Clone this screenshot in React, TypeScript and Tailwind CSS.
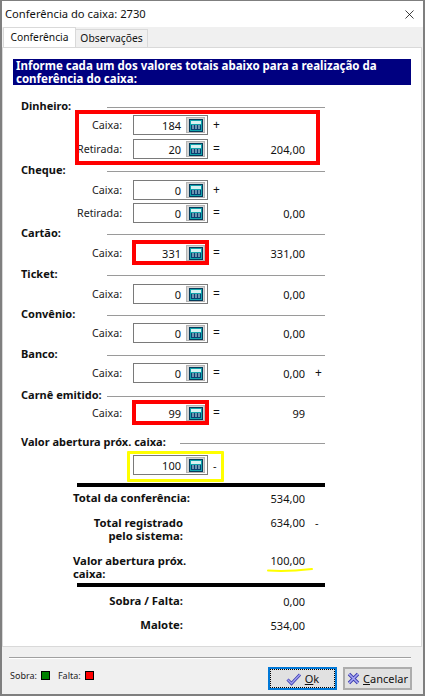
import { X } from "lucide-react";

const FONT = "font-['Noto_Sans','DejaVu_Sans',sans-serif]";

function CalcIcon() {
  return (
    <div className="flex h-[16px] w-[19px] items-center justify-center border border-[#b4b4b4] bg-[#d4d4d4]">
      <svg width="14" height="13" viewBox="0 0 14 13">
        <rect x="0.5" y="0.5" width="13" height="12" fill="#12a5ad" stroke="#063a5a" />
        <rect x="2" y="2" width="10" height="3" fill="#d8f2f2" />
        <rect x="2" y="6" width="10" height="5" fill="#0a3f70" />
        <path d="M3 7h2M6 7h2M9 7h2M3 9h2M6 9h2M9 9h2" stroke="#cfe8ee" strokeWidth="1" />
      </svg>
    </div>
  );
}

function Field({ value }: { value: string }) {
  return (
    <div className="flex h-5 w-[75px] items-center justify-end border border-[#7a7a7a] bg-white pr-[2px]">
      <span className="mr-[5px] text-[11px] leading-none text-[#111]">{value}</span>
      <CalcIcon />
    </div>
  );
}

function Heading({ label, line, className }: { label: string; line: string; className: string }) {
  return (
    <div className={`flex h-[14px] items-center pr-[96px] pl-[18px] ${className}`}>
      <span className="mb-[2px] text-[11px] leading-none font-bold whitespace-nowrap text-[#111]">{label}</span>
      <div className={`mt-[2px] ml-auto h-px bg-[#9a9a9a] ${line}`} />
    </div>
  );
}

function FieldRow({
  label,
  value,
  op,
  total,
  suffix,
  className,
  highlight,
}: {
  label: string;
  value: string;
  op: string;
  total?: string;
  suffix?: string;
  className: string;
  highlight?: boolean;
}) {
  return (
    <div className={`flex h-5 items-center ${className}`}>
      <span className="w-[130px] pr-[11px] text-right text-[10.7px] leading-none text-[#222]">{label}</span>
      <div className="relative">
        <Field value={value} />
        {highlight && <div className="absolute -top-[3px] -right-[1px] -bottom-[2px] -left-[1px] border-4 border-[#ff0000]" />}
      </div>
      <span className="ml-[5px] w-[10px] text-[12px] leading-none text-[#111]">{op}</span>
      <span className="w-[82px] text-right text-[11px] leading-none text-[#111]">{total}</span>
      {suffix && <span className="ml-[10px] text-[12px] leading-none text-[#111]">{suffix}</span>}
    </div>
  );
}

function Bar({ className }: { className: string }) {
  return <div className={`mr-[96px] ml-[74px] h-1 bg-black ${className}`} />;
}

export default function App() {
  return (
    <div className={`flex h-[696px] w-[425px] flex-col overflow-hidden border-2 border-t-[1px] border-[#7f7f7f] bg-[#f0f0f0] ${FONT}`}>
      {/* title */}
      <div className="flex h-[26px] shrink-0 items-center justify-between bg-white pr-[6px] pl-[3px]">
        <span className="text-[11.2px] leading-none text-[#111]">Conferência do caixa: 2730</span>
        <X size={15} strokeWidth={1.2} className="text-black" />
      </div>

      {/* tabs */}
      <div className="flex h-5 shrink-0 items-end pl-[1px]">
        <div className="relative z-10 flex h-[20px] w-[73px] items-center justify-center border border-b-0 border-[#d9d9d9] bg-white text-[10.3px] leading-none text-[#111]">
          Conferência
        </div>
        <div className="flex h-[18px] w-[72px] items-center justify-center border border-b-0 border-l-0 border-[#d9d9d9] text-[10.3px] leading-none text-[#111]">
          Observações
        </div>
      </div>

      {/* panel */}
      <div className="mr-[1px] flex h-[600px] shrink-0 flex-col border border-[#d9d9d9] bg-white pt-[11px]">
        <div className="mr-[10px] ml-[10px] h-[26px] bg-[#000080] pl-[3px] text-[11.5px] leading-[13px] font-bold text-white">
          Informe cada um dos valores totais abaixo para a realização da
          <br />
          conferência do caixa:
        </div>

        <Heading label="Dinheiro:" line="w-[218px]" className="mt-[14px]" />
        <div className="relative mt-[2px]">
          <FieldRow label="Caixa:" value="184" op="+" className="" />
          <FieldRow label="Retirada:" value="20" op="=" total="204,00" className="mt-1" />
          <div className="absolute -top-[5px] -bottom-[6px] left-[72px] w-[245px] border-4 border-[#ff0000]" />
        </div>

        <Heading label="Cheque:" line="w-[218px]" className="mt-1" />
        <FieldRow label="Caixa:" value="0" op="+" className="mt-[3px]" />
        <FieldRow label="Retirada:" value="0" op="=" total="0,00" className="mt-[3px]" />

        <Heading label="Cartão:" line="w-[218px]" className="mt-[3px]" />
        <FieldRow label="Caixa:" value="331" op="=" total="331,00" className="mt-[3px]" highlight />

        <Heading label="Ticket:" line="w-[218px]" className="mt-1" />
        <FieldRow label="Caixa:" value="0" op="=" total="0,00" className="mt-[3px]" />

        <Heading label="Convênio:" line="w-[218px]" className="mt-[3px]" />
        <FieldRow label="Caixa:" value="0" op="=" total="0,00" className="mt-[2px]" />

        <Heading label="Banco:" line="w-[218px]" className="mt-1" />
        <FieldRow label="Caixa:" value="0" op="=" total="0,00" suffix="+" className="mt-[2px]" />

        <Heading label="Carnê emitido:" line="w-[218px]" className="mt-[5px]" />
        <FieldRow label="Caixa:" value="99" op="=" total="99" className="mt-px" highlight />

        <Heading label="Valor abertura próx. caixa:" line="w-[145px]" className="mt-3" />
        <div className="mt-[6px] flex h-5 items-center pl-[130px]">
          <div className="relative">
            <Field value="100" />
            <div className="absolute -top-[4px] -right-[16px] -bottom-[7px] -left-[6px] rounded-[1px] border-[3px] border-[#ffff00]" />
          </div>
          <span className="ml-[5px] text-[11px] leading-none text-[#111]">-</span>
        </div>

        <Bar className="mt-2" />

        <div className="mt-[4px] flex h-[14px] items-center text-[11px] leading-none">
          <span className="ml-[70px] w-[148px] text-[11.3px] font-bold text-[#111]">Total da conferência:</span>
          <span className="w-[84px] text-right text-[#111]">534,00</span>
        </div>
        <div className="mt-[10px] flex h-[28px] text-[11px] leading-[13px]">
          <span className="w-[181px] pt-px pr-[1px] pl-[60px] text-right text-[11.3px] font-bold text-[#111]">
            Total registrado
            <br />
            pelo sistema:
          </span>
          <span className="w-[121px] pt-px text-right text-[#111]">634,00</span>
          <span className="ml-[10px] pt-px text-[#111]">-</span>
        </div>
        <div className="mt-[11px] flex h-[28px] text-[11px] leading-[13px]">
          <span className="ml-[70px] w-[148px] text-[11.3px] font-bold text-[#111]">
            Valor abertura próx.
            <br />
            caixa:
          </span>
          <span className="relative h-[14px] w-[84px] text-right text-[#111]">
            100,00
            <svg className="absolute top-[13px] right-[-8px]" width="46" height="6" viewBox="0 0 46 6">
              <path d="M1 3.5C14 4.5 32 3.5 45 2" fill="none" stroke="#ffff00" strokeWidth="2" strokeLinecap="round" />
            </svg>
          </span>
        </div>

        <Bar className="mt-[1px]" />

        <div className="mt-[7px] flex h-[14px] items-center text-[11px] leading-none">
          <span className="w-[181px] pr-[1px] text-right text-[11.3px] font-bold text-[#111]">Sobra / Falta:</span>
          <span className="w-[121px] text-right text-[#111]">0,00</span>
        </div>
        <div className="mt-[10px] flex h-[14px] items-center text-[11px] leading-none">
          <span className="w-[181px] pr-[1px] text-right text-[11.3px] font-bold text-[#111]">Malote:</span>
          <span className="w-[121px] text-right text-[#111]">534,00</span>
        </div>
      </div>

      {/* footer */}
      <div className="flex min-h-0 flex-1 flex-col pt-[10px]">
        <div className="mr-[12px] ml-[7px] h-[2px] border-t border-b border-t-[#a0a0a0] border-b-white" />
        <div className="mt-[8px] flex items-start justify-between pr-[11px] pl-[8px]">
          <div className="mt-[4px] flex items-center text-[9px] leading-none text-[#222]">
            <span>Sobra:</span>
            <span className="ml-[4px] h-[9px] w-[9px] border border-black bg-[#008000]" />
            <span className="ml-[8px]">Falta:</span>
            <span className="ml-[4px] h-[9px] w-[9px] border border-black bg-[#ff0000]" />
          </div>
          <div className="flex gap-[6px]">
            <button className="flex h-[23px] w-[69px] items-center justify-center gap-[3px] border-2 border-[#0078d7] bg-[#e1e1e1] text-[11px] leading-none text-[#111] outline-1 -outline-offset-3 outline-black outline-dotted">
              <svg width="16" height="14" viewBox="0 0 16 14">
                <path d="M1.5 7.5 L5.5 11.5 L14 2.5" fill="none" stroke="#3b3bb0" strokeWidth="3" />
                <path d="M1.5 7.5 L5.5 11.5 L14 2.5" fill="none" stroke="#a0a0f0" strokeWidth="1.4" />
              </svg>
              <span>
                <span className="underline">O</span>k
              </span>
            </button>
            <button className="flex h-[23px] w-[69px] items-center justify-center gap-[3px] border-2 border-[#adadad] bg-[#e1e1e1] text-[11px] leading-none text-[#111]">
              <svg width="13" height="13" viewBox="0 0 13 13">
                <path d="M2 2 L11 11 M11 2 L2 11" fill="none" stroke="#3b3bb0" strokeWidth="3.4" />
                <path d="M2 2 L11 11 M11 2 L2 11" fill="none" stroke="#a8a8f4" strokeWidth="1.6" />
              </svg>
              <span>
                <span className="underline">C</span>ancelar
              </span>
            </button>
          </div>
        </div>
      </div>
    </div>
  );
}
